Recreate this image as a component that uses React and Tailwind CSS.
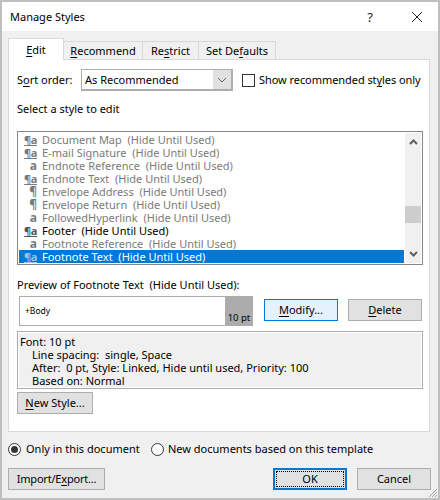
import React from "react";

const U = ({ children }) => <span className="underline underline-offset-2 decoration-1">{children}</span>;

const Btn = ({ children, className = "" }) => (
  <div className={"h-[22px] flex items-center justify-center border border-[#adadad] bg-[#e1e1e1] text-black shrink-0 " + className}>{children}</div>
);

const rows = [
  ["l", "Document Map"],
  ["l", "E-mail Signature"],
  ["c", "Endnote Reference"],
  ["l", "Endnote Text"],
  ["p", "Envelope Address"],
  ["p", "Envelope Return"],
  ["c", "FollowedHyperlink"],
  ["l", "Footer", "k"],
  ["c", "Footnote Reference"],
  ["l", "Footnote Text", "s"],
];

const Glyph = ({ t }) => {
  if (t === "l") return <span className="underline decoration-1 underline-offset-1 text-[11px] font-bold tracking-[-0.4px] leading-[13px]">¶a</span>;
  if (t === "p") return <span className="text-[12px] font-bold leading-[13px]">¶</span>;
  return <span className="text-[12px] font-bold leading-[13px]">a</span>;
};

const Row = ({ g, name, kind }) => {
  const color = kind === "k" ? "text-black" : kind === "s" ? "text-white bg-[#0078d7]" : "text-[#7a7a7a]";
  return (
    <div className={"h-[13px] flex items-center whitespace-nowrap shrink-0 leading-[13px] " + color}>
      <span className={"w-[19px] pr-[1px] h-[13px] text-right shrink-0 flex justify-end " + (kind === "s" ? "text-[#9cc4e8]" : kind === "k" ? "text-[#555]" : "text-[#7a7a7a]")}>
        <Glyph t={g} />
      </span>
      <span className="ml-[4px]">{name}&nbsp; (Hide Until Used)</span>
    </div>
  );
};

export default function App() {
  return (
    <div
      className="w-[440px] h-[500px] bg-[#bfbfbf] p-[2px] text-[11px] leading-[16px] text-black overflow-hidden"
      style={{ fontFamily: '"Noto Sans", sans-serif' }}
    >
      <div className="relative w-[436px] h-[496px] bg-[#f0f0f0] flex flex-col">
        {/* title bar */}
        <div className="h-[29px] bg-white flex items-center shrink-0">
          <span className="ml-[8px] text-[11px]">Manage Styles</span>
          <span className="ml-auto mr-[38px] text-[13px] text-[#222]">?</span>
          <svg width="12" height="12" viewBox="0 0 12 12" className="mr-[15px]">
            <path d="M1 1 L11 11 M11 1 L1 11" stroke="#222" strokeWidth="1" fill="none" />
          </svg>
        </div>

        {/* tabs */}
        <div className="flex items-end h-[29px] ml-[6px] shrink-0 relative z-10">
          <div className="w-[56px] h-[22px] bg-white border border-[#d9d9d9] border-b-0 flex items-center justify-center">
            <span><U>E</U>dit</span>
          </div>
          <div className="w-[79px] h-[19px] bg-[#f0f0f0] border border-[#d9d9d9] border-l-0 flex items-center justify-center"><span><U>R</U>ecommend</span></div>
          <div className="w-[56px] h-[19px] bg-[#f0f0f0] border border-[#d9d9d9] border-l-0 flex items-center justify-center"><span>Re<U>s</U>trict</span></div>
          <div className="w-[77px] h-[19px] bg-[#f0f0f0] border border-[#d9d9d9] border-l-0 flex items-center justify-center"><span>Set De<U>f</U>aults</span></div>
        </div>

        {/* panel */}
        <div className="mx-[6px] w-[422px] h-[373px] -mt-[1px] bg-white border border-[#d9d9d9] shrink-0 pl-[8px] flex flex-col">
          <div className="flex items-center h-[22px] mt-[9px] shrink-0">
            <span className="w-[64px]">S<U>o</U>rt order:</span>
            <div className="w-[152px] h-[22px] border-2 border-[#adadad] border-l border-t bg-white flex items-center">
              <span className="ml-[3px]">As Recommended</span>
              <div className="ml-auto w-[18px] h-full bg-[#e1e1e1] flex items-center justify-center">
                <svg width="10" height="6" viewBox="0 0 10 6"><path d="M1 1 L5 5 L9 1" stroke="#666" fill="none" /></svg>
              </div>
            </div>
            <div className="ml-[9px] w-[13px] h-[13px] border border-[#333] bg-white" />
            <span className="ml-[4px] whitespace-nowrap tracking-[-0.06px]">Show recommended st<U>y</U>les only</span>
          </div>
          <div className="mt-[10px] h-[16px] shrink-0">Select a style to edit</div>

          {/* list */}
          <div className="mt-[14px] w-[406px] h-[134px] border border-[#82878c] p-[1px] flex shrink-0">
            <div className="w-[385px] flex flex-col overflow-hidden">
              {rows.map((r) => <Row key={r[1]} g={r[0]} name={r[1]} kind={r[2]} />)}
            </div>
            <div className="ml-[1px] w-[16px] bg-[#f0f0f0] flex flex-col items-center relative">
              <svg width="9" height="6" viewBox="0 0 9 6" className="mt-[6px]"><path d="M1 5 L4.5 1.5 L8 5" stroke="#606060" strokeWidth="2" fill="none" /></svg>
              <div className="absolute left-0 top-[73px] w-full h-[17px] bg-[#cdcdcd]" />
              <svg width="9" height="6" viewBox="0 0 9 6" className="mt-auto mb-[6px]"><path d="M1 1 L4.5 4.5 L8 1" stroke="#606060" strokeWidth="2" fill="none" /></svg>
            </div>
          </div>

          <div className="mt-[12px] h-[16px] shrink-0 whitespace-nowrap">Preview of Footnote Text&nbsp; (Hide Until Used):</div>

          <div className="flex mt-[3px] h-[30px] shrink-0">
            <div className="ml-[2px] w-[234px] h-[30px] border border-[#adadad] bg-white flex">
              <span className="ml-[5px] mt-[7px] text-[8.5px] leading-[14px]">+Body</span>
              <div className="ml-auto w-[28px] -my-[1px] -mr-[1px] h-[30px] bg-[#acacac] flex items-end justify-center">
                <span className="text-[9.5px] leading-[14px] mb-[1px]">10 pt</span>
              </div>
            </div>
            <div className="ml-[11px] mt-[3px] flex gap-[10px]">
              <Btn className="w-[74px] !border-[#0078d7] !bg-[#e5f1fb]"><span><U>M</U>odify...</span></Btn>
              <Btn className="w-[74px]"><span><U>D</U>elete</span></Btn>
            </div>
          </div>

          {/* description */}
          <div className="mt-[5px] w-[406px] h-[58px] border border-[#adadad] bg-white p-[1px] shrink-0">
            <div className="h-full bg-[#f0f0f0] pl-[1px] pt-[2px] flex flex-col leading-[13px] whitespace-nowrap">
              <div>Font: 10 pt</div>
              <div className="pl-[12px]">Line spacing:&nbsp; single, Space</div>
              <div className="pl-[12px]">After:&nbsp; 0 pt, Style: Linked, Hide until used, Priority: 100</div>
              <div className="pl-[12px]">Based on: Normal</div>
            </div>
          </div>

          <Btn className="mt-[3px] w-[76px]"><span><U>N</U>ew Style...</span></Btn>
        </div>

        {/* radios */}
        <div className="flex items-center h-[16px] mt-[9px] ml-[6px] shrink-0">
          <div className="w-[13px] h-[13px] rounded-full border border-[#333] bg-white flex items-center justify-center">
            <div className="w-[7px] h-[7px] rounded-full bg-[#333]" />
          </div>
          <span className="ml-[5px] w-[120px] whitespace-nowrap">Only in this document</span>
          <div className="w-[13px] h-[13px] rounded-full border border-[#333] bg-white ml-[5px]" />
          <span className="ml-[4px] whitespace-nowrap">New documents based on this template</span>
        </div>

        {/* footer buttons */}
        <div className="flex mt-[11px] ml-[6px] shrink-0">
          <Btn className="w-[97px]"><span className="tracking-[-0.2px]">Import/E<U>x</U>port...</span></Btn>
          <div className="ml-[168px] w-[74px] h-[22px] border-2 border-[#0078d7] bg-[#e1e1e1] p-[1px] shrink-0">
            <div className="w-full h-full border border-dotted border-black flex items-center justify-center">OK</div>
          </div>
          <Btn className="ml-[10px] w-[74px]">Cancel</Btn>
        </div>

        {/* resize grip */}
        <svg width="10" height="10" viewBox="0 0 10 10" className="absolute right-0 bottom-0">
          <path d="M9 1 L1 9 M9 4 L4 9 M9 7 L7 9" stroke="#a0a0a0" fill="none" />
        </svg>
      </div>
    </div>
  );
}
